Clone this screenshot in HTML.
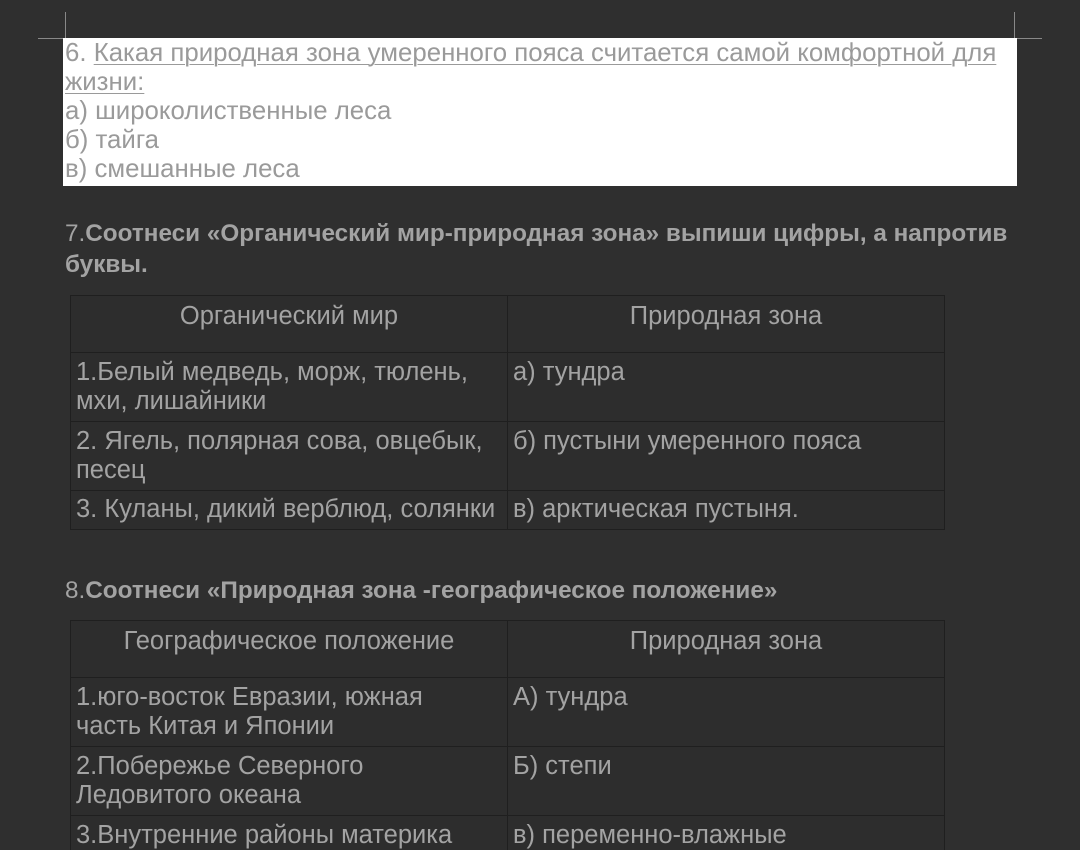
<!DOCTYPE html>
<html><head><meta charset="utf-8"><style>
html,body{margin:0;padding:0;width:1080px;height:850px;overflow:hidden;}
body{background:#2f2f2f;position:relative;font-family:"Liberation Sans",sans-serif;color:#a3a3a3;font-size:25.5px;}
.a{position:absolute;white-space:nowrap;}
.box{position:absolute;left:63px;top:38px;width:954px;height:148px;background:#fff;}
.box div{position:absolute;left:2px;white-space:nowrap;color:#9a9a9a;font-size:25.8px;line-height:29px;}
u{text-decoration:underline;text-decoration-thickness:1px;text-underline-offset:3px;}
b{font-weight:bold;}
table{position:absolute;left:70px;width:875px;border-collapse:collapse;background:#2d2d2d;table-layout:fixed;}
td{border:1px solid #1f1f1f;vertical-align:top;padding:5px 5px 0 5px;line-height:29px;width:50%;font-size:25.5px;overflow:hidden;}
td.h{text-align:center;padding-top:6px;}
</style></head><body>
<div class="a" style="left:65px;top:12px;width:1px;height:26px;background:#888"></div>
<div class="a" style="left:38px;top:38px;width:27px;height:1px;background:#888"></div>
<div class="a" style="left:1014px;top:12px;width:1px;height:26px;background:#888"></div>
<div class="a" style="left:1017px;top:38px;width:25px;height:1px;background:#888"></div>
<div class="box">
<div style="top:1px">6. <u>Какая природная зона умеренного пояса считается самой комфортной для</u></div>
<div style="top:30px"><u>жизни:</u></div>
<div style="top:59px">а) широколиственные леса</div>
<div style="top:88px">б) тайга</div>
<div style="top:117px">в) смешанные леса</div>
</div>
<div class="a" style="left:65px;top:218px;line-height:31px;font-size:24.3px">7.<b>Соотнеси «Органический мир-природная зона» выпиши цифры, а напротив</b><br><b>буквы.</b></div>
<table style="top:295px">
<tr style="height:57px"><td class="h">Органический мир</td><td class="h">Природная зона</td></tr>
<tr style="height:69px"><td>1.Белый медведь, морж, тюлень, мхи, лишайники</td><td>а) тундра</td></tr>
<tr style="height:69px"><td>2. Ягель, полярная сова, овцебык, песец</td><td>б) пустыни умеренного пояса</td></tr>
<tr style="height:39px"><td style="white-space:nowrap;padding-top:4px">3. Куланы, дикий верблюд, солянки</td><td style="padding-top:4px">в) арктическая пустыня.</td></tr>
</table>
<div class="a" style="left:65px;top:575px;line-height:31px;font-size:24.3px">8.<b>Соотнеси «Природная зона -географическое положение»</b></div>
<table style="top:620px">
<tr style="height:57px"><td class="h">Географическое положение</td><td class="h">Природная зона</td></tr>
<tr style="height:69px"><td>1.юго-восток Евразии, южная<br>часть Китая и Японии</td><td>А) тундра</td></tr>
<tr style="height:69px"><td>2.Побережье Северного Ледовитого океана</td><td>Б) степи</td></tr>
<tr style="height:69px"><td>3.Внутренние районы материка</td><td>в) переменно-влажные</td></tr>
</table>
</body></html>
